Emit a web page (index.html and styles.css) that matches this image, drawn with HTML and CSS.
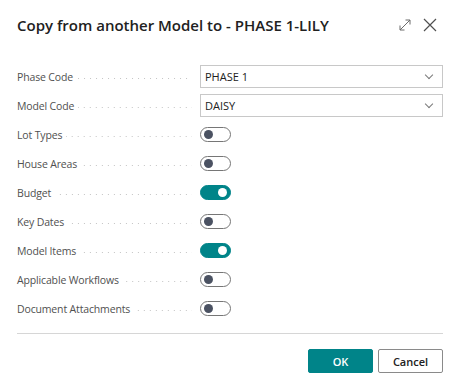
FILE: index.html
```html
<!DOCTYPE html>
<html lang="en">
<head>
    <meta charset="UTF-8">
    <meta name="viewport" content="width=device-width, initial-scale=1.0">
    <title>Copy from another Model</title>
    <link rel="stylesheet" href="styles.css">
</head>
<body>
    <div class="dialog">
        <header class="dialog-header">
            <h1>Copy from another Model to - PHASE 1-LILY</h1>
            <div class="header-icons">
                <!-- expand -->
                <svg class="icon" width="14" height="14" viewBox="0 0 14 14">
                    <path d="M2 12 L12 2 M7.5 2 H12 V6.5 M2 7.5 V12 H6.5" fill="none" stroke="#6b6b6b" stroke-width="1"/>
                </svg>
                <!-- close -->
                <svg class="icon" width="14" height="14" viewBox="0 0 14 14">
                    <path d="M1 1 L13 13 M13 1 L1 13" fill="none" stroke="#505050" stroke-width="1.2"/>
                </svg>
            </div>
        </header>

        <div class="fields">
            <div class="field">
                <span class="label">Phase Code</span><span class="leader"></span>
                <div class="select">PHASE 1<span class="chevron"></span></div>
            </div>
            <div class="field">
                <span class="label">Model Code</span><span class="leader"></span>
                <div class="select">DAISY<span class="chevron"></span></div>
            </div>
            <div class="field">
                <span class="label">Lot Types</span><span class="leader"></span>
                <div class="value"><span class="toggle"></span></div>
            </div>
            <div class="field">
                <span class="label">House Areas</span><span class="leader"></span>
                <div class="value"><span class="toggle"></span></div>
            </div>
            <div class="field">
                <span class="label">Budget</span><span class="leader"></span>
                <div class="value"><span class="toggle on"></span></div>
            </div>
            <div class="field">
                <span class="label">Key Dates</span><span class="leader"></span>
                <div class="value"><span class="toggle"></span></div>
            </div>
            <div class="field">
                <span class="label">Model Items</span><span class="leader"></span>
                <div class="value"><span class="toggle on"></span></div>
            </div>
            <div class="field">
                <span class="label">Applicable Workflows</span><span class="leader"></span>
                <div class="value"><span class="toggle"></span></div>
            </div>
            <div class="field">
                <span class="label">Document Attachments</span><span class="leader"></span>
                <div class="value"><span class="toggle"></span></div>
            </div>
        </div>

        <div class="divider"></div>

        <footer class="actions">
            <button class="btn btn-primary">OK</button>
            <button class="btn">Cancel</button>
        </footer>
    </div>
</body>
</html>
```

FILE: styles.css
```css
body {
    margin: 0;
    background-color: #ffffff;
    font-family: "Open Sans", "Noto Sans", sans-serif;
    color: #505050;
}

.dialog {
    padding: 0 17px;
}

.dialog-header {
    display: flex;
    align-items: center;
    justify-content: space-between;
    height: 50px;
}

.dialog-header h1 {
    margin: 0;
    font-size: 15px;
    font-weight: 600;
    color: #212121;
}

.header-icons {
    display: flex;
    gap: 11px;
    padding-right: 6px;
}

.fields {
    display: flex;
    flex-direction: column;
    gap: 6px;
    margin-top: 15px;
}

.field {
    display: flex;
    align-items: center;
    height: 23px;
}

.label {
    font-size: 10.5px;
    letter-spacing: -0.15px;
    color: #505050;
    white-space: nowrap;
}

.leader {
    flex: 1;
    height: 1px;
    margin: 3px 8px 0 4px;
    background-image: linear-gradient(to right, #c4c4c4 1px, transparent 1px);
    background-size: 6px 1px;
    background-position: right;
}

.select,
.value {
    width: 243px;
    flex-shrink: 0;
    box-sizing: border-box;
}

.select {
    display: flex;
    align-items: center;
    justify-content: space-between;
    height: 23px;
    padding: 0 10px 0 4px;
    border: 1px solid #c8c8c8;
    font-size: 11px;
    color: #212121;
}

.chevron {
    width: 5px;
    height: 5px;
    border-right: 1px solid #7a7a7a;
    border-bottom: 1px solid #7a7a7a;
    transform: rotate(45deg);
    margin-top: -4px;
}

.value {
    display: flex;
    align-items: center;
}

.toggle {
    position: relative;
    width: 31px;
    height: 15px;
    box-sizing: border-box;
    border: 1px solid #767676;
    border-radius: 8px;
}

.toggle::after {
    content: "";
    position: absolute;
    top: 2px;
    left: 3px;
    width: 9px;
    height: 9px;
    border-radius: 50%;
    background-color: #4b5262;
}

.toggle.on {
    background-color: #008489;
    border-color: #008489;
}

.toggle.on::after {
    left: auto;
    right: 3px;
    background-color: #ffffff;
}

.divider {
    height: 1px;
    background-color: #d6d6d6;
    margin: 13px 0 15px;
}

.actions {
    display: flex;
    justify-content: flex-end;
    gap: 5px;
}

.btn {
    width: 65px;
    height: 24px;
    border: 1px solid #8a8a8a;
    border-radius: 2px;
    background-color: #ffffff;
    font-family: "Open Sans", "Noto Sans", sans-serif;
    font-size: 11px;
    font-weight: 600;
    color: #212121;
    cursor: pointer;
}

.btn-primary {
    background-color: #008489;
    border-color: #008489;
    color: #ffffff;
}
```
